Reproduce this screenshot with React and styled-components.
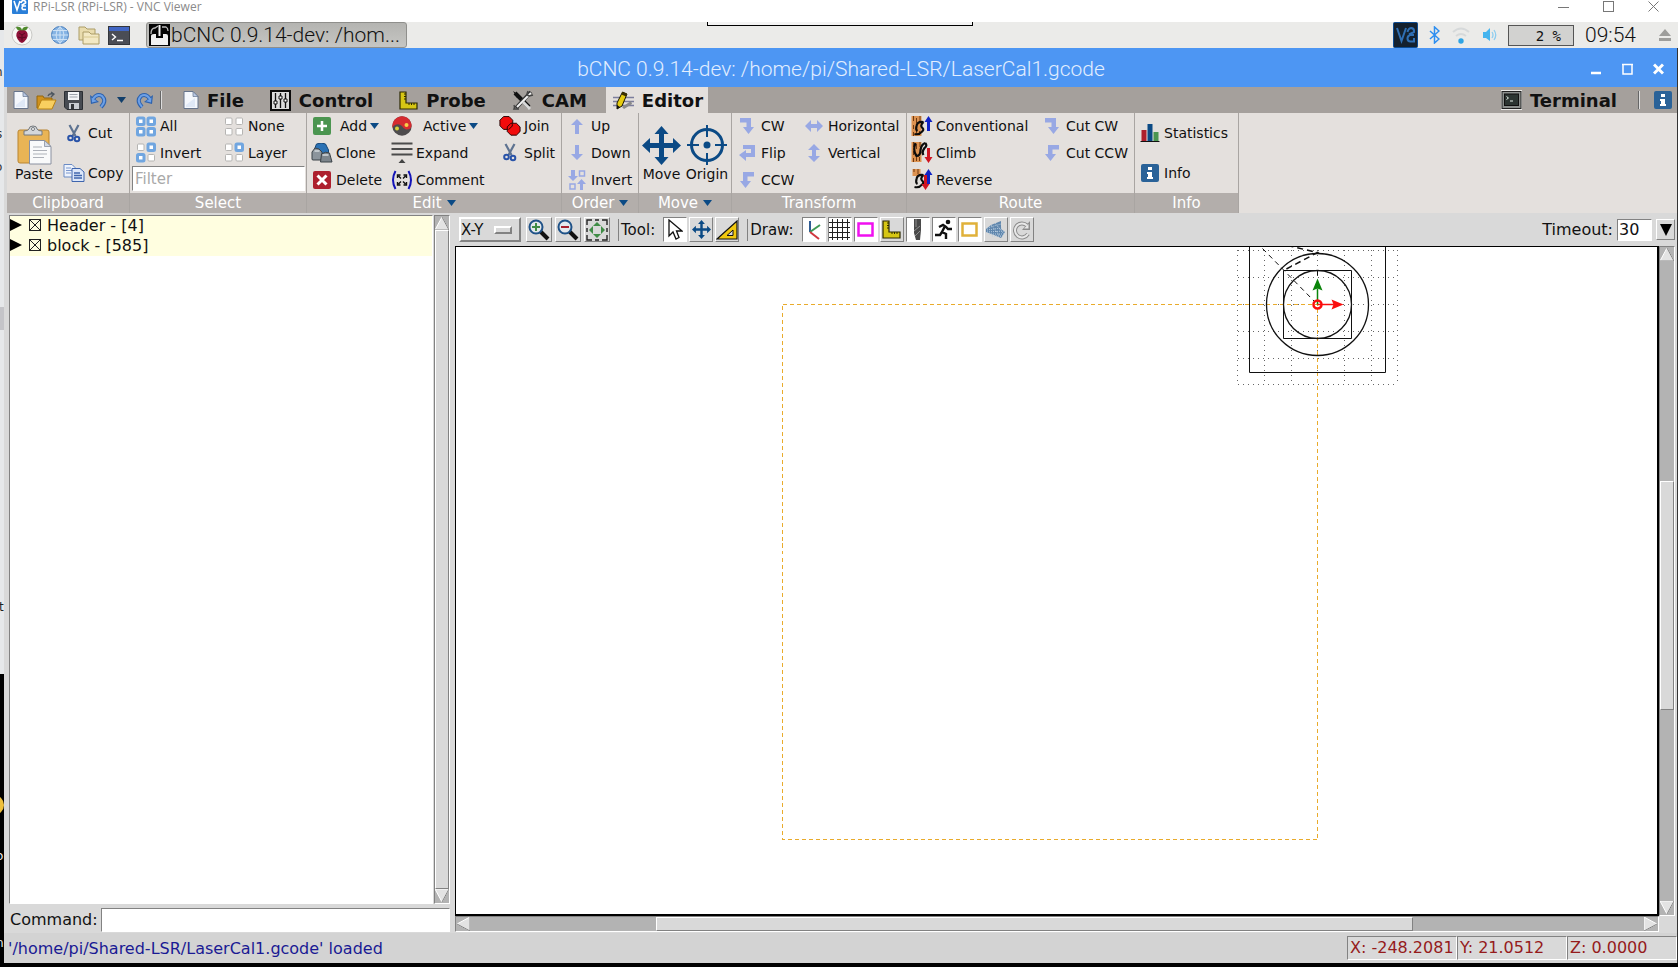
import React, { useState } from 'react';
import styled, { createGlobalStyle, css } from 'styled-components';

/* ---------- icons ---------- */

const Svg = ({ w, h, children, ...rest }) => (
  <svg width={w} height={h} viewBox={`0 0 ${w} ${h}`} fill="none" aria-hidden="true" {...rest}>
    {children}
  </svg>
);

const Caret = ({ color = '#0b4a85' }) => (
  <Svg w={9} h={6}>
    <path d="M0 0h9L4.5 6z" fill={color} />
  </Svg>
);

const VncLogo = () => (
  <Svg w={16} h={16}>
    <rect width="16" height="16" rx="1" fill="#2a7fd8" />
    <path d="M2 3l3 9 3-9M9 5q1-3 3-2.500 2 .5 1.500 2.500L9.500 7.500M14 8H11q-2 2 0 3.500h3" stroke="#fff" strokeWidth="1.600" />
  </Svg>
);

const TrayVnc = () => (
  <Svg w={25} h={26}>
    <rect x=".5" y=".5" width="24" height="25" rx="1" fill="#14212f" stroke="#0b4b93" />
    <path d="M4 6l4.500 13L13 6M14.500 10q1-4 4-4 3 .5 2.500 4l-5 2.500M21 13h-4q-2.500 1-2.500 3.500 0 3 3 3H21v-3.500" stroke="#2f6fb4" strokeWidth="2" />
  </Svg>
);

const Raspberry = () => (
  <Svg w={22} h={22}>
    <circle cx="11" cy="11" r="10" fill="#f8f8f6" stroke="#c9c9c6" />
    <path d="M5 3q5-1 6 3 1-4 6-3-1 4-5 4h-2Q6 7 5 3z" fill="#4f8a2c" />
    <path d="M11 6.500q4-1 5.500 3 1 3-1 5.500-2 3-4.500 4-3-1-4.500-4-2-2.500-1-5.500 1.500-4 5.500-3z" fill="#8e1238" />
    <path d="M8 9l3 2 3-2M7 13l4 1 4-1M11 11v6" stroke="#5c0a22" />
  </Svg>
);

const Globe = () => (
  <Svg w={20} h={20}>
    <circle cx="10" cy="10" r="8.500" fill="#86b4e4" stroke="#4a7fbd" />
    <path d="M10 1.500v17M1.500 10h17M3 5.500h14M3 14.500h14M10 1.500q-8 8.500 0 17 8-8.500 0-17z" stroke="#d5e6f7" strokeWidth=".9" />
  </Svg>
);

const Folders = () => (
  <Svg w={22} h={20}>
    <path d="M1 15V2h6l2 2h8v11z" fill="#e9dcae" stroke="#ab9c66" />
    <path d="M5 19V7h6l2 2h8v10z" fill="#f3e9c4" stroke="#ab9c66" />
    <path d="M5 12h16" stroke="#d7c890" />
  </Svg>
);

const TermIcon = () => (
  <Svg w={22} h={19}>
    <rect x=".5" y=".5" width="21" height="18" fill="#4a4d55" stroke="#33363c" />
    <rect x="1" y="1" width="20" height="4" fill="#4166c4" />
    <path d="M4 8l3.500 3L4 14M9 14.500h6" stroke="#fff" strokeWidth="1.400" />
  </Svg>
);

const TaskIcon = () => (
  <Svg w={21} h={22}>
    <rect width="21" height="22" fill="#050505" />
    <path d="M2 21V12q0-2 3-2h2v4h7v-4h3q2 0 2 2v9z" fill="#f1f1f1" />
    <path d="M2 10q0-6 4-6l3-2M13 3h4q2 1 2 4" stroke="#bbb" strokeWidth="1.300" />
    <path d="M10.500 1v11" stroke="#f1f1f1" strokeWidth="2" />
  </Svg>
);

const Bluetooth = () => (
  <Svg w={11} h={18}>
    <path d="M1 5l9 8-4.500 4V1L10 5l-9 8" stroke="#2d8ef0" strokeWidth="1.500" />
  </Svg>
);

const Wifi = () => (
  <Svg w={20} h={18}>
    <path d="M2 6q8-7 16 0M5 10q5-4 10 0" stroke="#d6d9da" strokeWidth="2" />
    <circle cx="10" cy="15" r="2.700" fill="#2fa4e4" />
  </Svg>
);

const Volume = () => (
  <Svg w={15} h={14}>
    <path d="M1 4h3l4-4v13L4 10H1z" fill="#45b4ee" />
    <path d="M10 4q2 3 0 6M12 2q3.500 5 0 10" stroke="#8ecdf0" strokeWidth="1.300" />
  </Svg>
);

const Eject = () => (
  <Svg w={12} h={12}>
    <path d="M6 0l6 7H0zM0 9h12v3H0z" fill="#9d9d9b" />
  </Svg>
);

const NewDoc = () => (
  <Svg w={16} h={18}>
    <path d="M1 .5h9l5 5v12H1z" fill="#f4f7fc" stroke="#66748c" />
    <path d="M10 .5v5h5z" fill="#b9c9e4" stroke="#66748c" strokeWidth=".7" />
    <path d="M3 14l9-7v9H3z" fill="#dfe8f6" />
  </Svg>
);

const OpenIcon = () => (
  <Svg w={21} h={19}>
    <path d="M1 17V5h6l1 2h8v10z" fill="#d0911d" stroke="#94670d" />
    <path d="M1.500 18l4-9H20l-4 9z" fill="#f8cf60" stroke="#b98213" />
    <path d="M12 5q1-3 5-2M15 1l3 2-3 3" stroke="#4d5660" strokeWidth="1.300" />
  </Svg>
);

const SaveIcon = () => (
  <Svg w={19} h={19}>
    <path d="M.5.5h18v18H3L.5 16z" fill="#474b52" stroke="#2b2e33" />
    <path d="M4 1h11v8H4z" fill="#f4f5f7" />
    <path d="M5.500 3.500h8M5.500 6h8" stroke="#9da2aa" />
    <path d="M5 12h10v6H5z" fill="#c8ccd2" />
    <path d="M7 13h3v5H7z" fill="#33363b" />
  </Svg>
);

const UndoIcon = ({ flip }) => (
  <Svg w={17} h={17}>
    <g transform={flip ? 'translate(17 0) scale(-1 1)' : undefined}>
      <path d="M3 7q4-6 9-3 5 5-1 11" stroke="#2d62ae" strokeWidth="4" />
      <path d="M0 3l1 9 8-2z" fill="#2d62ae" />
      <path d="M3 7q4-6 9-3 5 5-1 11" stroke="#6da0e6" strokeWidth="2" />
      <path d="M1.500 5.500l.5 5 5-1.200z" fill="#6da0e6" />
    </g>
  </Svg>
);

const Sliders = () => (
  <Svg w={21} h={21}>
    <rect x="1" y="1" width="19" height="19" fill="#dcdcdc" stroke="#0c0c0c" strokeWidth="2" />
    <path d="M5.500 3v15M10.500 3v15M15.500 3v15" stroke="#111" strokeWidth="1.300" />
    <path d="M4 11h3v3H4zM9 6h3v3H9zM14 9h3v3h-3z" fill="#fff" stroke="#111" />
  </Svg>
);

const Ruler = () => (
  <Svg w={19} h={19}>
    <path d="M1 1h6v11h11v6H1z" fill="#d6c614" stroke="#2c2800" strokeWidth="1.200" />
    <path d="M7 3H5M7 5.500H5M7 8H5M10 12v2M12.500 12v2M15 12v2" stroke="#2c2800" />
  </Svg>
);

const Tools = () => (
  <Svg w={22} h={21}>
    <path d="M3 3l14 14" stroke="#111" strokeWidth="4" />
    <path d="M19 2L4 18" stroke="#333" strokeWidth="4" />
    <path d="M19 3L5 17" stroke="#f2f2f2" strokeWidth="2" />
    <path d="M11 12l7 7" stroke="#d8d8d8" strokeWidth="3" />
    <path d="M16 1q-2 4 1 5l4-1M2 15q1 2 0 4h5" stroke="#444" strokeWidth="1.500" />
    <path d="M1 1l6 4-2 3z" fill="#111" />
  </Svg>
);

const Pencil = () => (
  <Svg w={21} h={19}>
    <path d="M0 6.500h21M0 10.500h21M0 14.500h21" stroke="#7c7e9d" strokeWidth="1.300" />
    <path d="M9 16l9-6 1 3-8 5z" fill="#8a8a8a" />
    <path d="M9.500 1l4.500 2-5 12-5 3V12z" fill="#e6cc10" stroke="#1c1800" />
    <path d="M9.500 1l4.500 2-1 2.500L8.500 3.500z" fill="#3b2f00" />
    <path d="M4 18v-4l3 2z" fill="#111" />
  </Svg>
);

const Console = () => (
  <Svg w={21} h={20}>
    <rect x="0" y="0" width="21" height="20" fill="#e9e9e7" />
    <rect x="1" y="1.500" width="19" height="17" fill="#8b8f8d" stroke="#222" />
    <rect x="3.500" y="4" width="14" height="11.500" fill="#2c3532" stroke="#111" />
    <path d="M5.500 6.500l2 1.500-2 1.500M9 11h3" stroke="#e5efe8" />
  </Svg>
);

const InfoIcon = () => (
  <Svg w={18} h={18}>
    <rect width="18" height="18" rx="2" fill="#2a6298" />
    <path d="M7 3h4v3H7zM6 8h5v5h1v2H6v-2h1v-3H6z" fill="#fff" />
  </Svg>
);

const PasteIcon = () => (
  <Svg w={35} h={40}>
    <rect x="1" y="5" width="31" height="33" rx="2" fill="#e9b455" stroke="#b98430" />
    <path d="M7 10V6q4 0 5-2 0-3 4-3t4 3q1 2 5 2v4z" fill="#d4d7da" stroke="#75797e" />
    <circle cx="16" cy="4" r="1.500" fill="#fff" stroke="#75797e" />
    <path d="M12.500 15.500h15l6.500 6V39H12.500z" fill="#f9fafb" stroke="#8990a0" />
    <path d="M27.500 15.500v6H34z" fill="#d3dae6" stroke="#8990a0" strokeWidth=".8" />
    <path d="M16 22h9M16 25.500h14M16 29h14M16 32.500h11" stroke="#adb1b9" strokeWidth="1.200" />
  </Svg>
);

const Scissors = () => (
  <Svg w={14} h={19}>
    <path d="M2.500 1l6 11M11.500 1l-6 11" stroke="#5e7391" strokeWidth="2.200" />
    <circle cx="3.500" cy="14" r="2.300" stroke="#2953a8" strokeWidth="2" />
    <circle cx="10" cy="15" r="2.300" stroke="#2953a8" strokeWidth="2" />
  </Svg>
);

const CopyIcon = () => (
  <Svg w={21} h={18}>
    <path d="M.5.5h8l3 3V13H.5z" fill="#eef3fc" stroke="#6b8bc4" />
    <path d="M2.500 4h5M2.500 6.500h6M2.500 9h5" stroke="#7b98cf" />
    <path d="M8.500 4.500h8l4 3.500v9.500h-12z" fill="#dce7fa" stroke="#3f65ad" />
    <path d="M10.500 9h6M10.500 11.500h8M10.500 14h8" stroke="#3f65ad" strokeWidth="1.300" />
  </Svg>
);

// four squares, the set digits are the highlighted ones
const Squares = ({ on = '' }) => (
  <Svg w={21} h={21}>
    {[0, 1, 2, 3].map((i) => {
      const active = on.includes(String(i));
      return (
        <rect
          key={i}
          x={2 + (i % 2) * 10.5}
          y={2 + Math.floor(i / 2) * 10.5}
          width="6.500"
          height="6.500"
          rx="1"
          fill="#fff"
          stroke={active ? '#71a6e0' : '#b5b4b2'}
          strokeWidth={active ? 3 : 1}
        />
      );
    })}
  </Svg>
);

const AddIcon = () => (
  <Svg w={18} h={18}>
    <rect width="18" height="18" rx="2" fill="#4b9550" />
    <path d="M9 4v10M4 9h10" stroke="#fff" strokeWidth="2.500" />
  </Svg>
);

const DeleteIcon = () => (
  <Svg w={18} h={18}>
    <rect width="18" height="18" rx="2" fill="#ad1f2d" />
    <path d="M4.500 4.500l9 9M13.500 4.500l-9 9" stroke="#fff" strokeWidth="3" />
  </Svg>
);

const CloneIcon = () => (
  <Svg w={21} h={20}>
    <path d="M5 1q5-2 9 0l3 6v5H6L3 6z" fill="#2b72b5" stroke="#174777" />
    <path d="M.5 16V9l3-4 4 1 3 3v8H1z" fill="#8b949c" stroke="#3b4248" />
    <path d="M9 19l1-8q4-3 8-1l2.500 9z" fill="#7d858c" stroke="#3b4248" />
    <path d="M3 8h5M11 12h6" stroke="#d4d9dd" strokeWidth="1.500" />
  </Svg>
);

const ActiveIcon = () => (
  <Svg w={20} h={20}>
    <circle cx="10" cy="10" r="9.700" fill="#4d4b4c" />
    <path d="M.5 12A9.700 9.700 0 0 1 19.500 8Q20 14 14 13.500 11 12 10 10 7 7 3 9 1 10 .5 12z" fill="#d62b30" />
    <circle cx="14.500" cy="9" r="2" fill="#f6d04a" />
    <circle cx="5" cy="12.500" r="2" fill="#d5d23a" />
  </Svg>
);

const ExpandIcon = () => (
  <Svg w={21} h={21}>
    <path d="M0 1.500h21M0 7h21M0 12.500h21" stroke="#4b4b4b" strokeWidth="2" />
    <path d="M7 21l3.500-4 3.500 4z" fill="#444" />
  </Svg>
);

const CommentIcon = () => (
  <Svg w={21} h={20}>
    <path d="M4 1Q-1 10 4 19M17 1q5 9 0 18" stroke="#1414b8" strokeWidth="2" />
    <path d="M6 8V5h3M12 5h3v3M15 12v3h-3M9 15H6v-3M7 6l2.500 2.500M14 6l-2.500 2.500M14 14l-2.500-2.500M7 14l2.500-2.500" stroke="#111" strokeWidth="1.400" />
  </Svg>
);

const JoinIcon = () => (
  <Svg w={24} h={22}>
    <path d="M5 .7h6l4 4v6l-4 4H5l-4-4v-6z" fill="#f20c0c" stroke="#1b0000" />
    <path d="M13 8h6l4 4v5l-4 4h-6l-4-4v-5z" fill="#f20c0c" stroke="#1b0000" />
    <path d="M14.500 9v2l-4 4" stroke="#1b0000" />
  </Svg>
);

const soft = '#98a8e4';

const UpArrow = ({ down }) => (
  <Svg w={14} h={15}>
    <path transform={down ? 'rotate(180 7 7.500)' : undefined} d="M7 0l6 6H9v9H5V6H1z" fill={soft} />
  </Svg>
);

const OrderInvert = () => (
  <Svg w={18} h={20}>
    <path d="M3 0h4v6h3l-5 5-5-5h3zM12 20h3v-6h3l-4.500-5L9 14h3z" fill={soft} />
    <rect x="11.500" y="1" width="5" height="5" stroke={soft} strokeWidth="1.500" />
    <rect x="2" y="14" width="5" height="5" stroke={soft} strokeWidth="1.500" />
  </Svg>
);

const MoveIcon = ({ size = 39 }) => (
  <svg width={size} height={size} viewBox="0 0 39 39" aria-hidden="true">
    <path
      d="M19.500 0l7 8h-4.500v9H31v-5l8 7.500-8 7.500v-5h-9V31h4.500l-7 8-7-8H17v-9H8v5l-8-7.500L8 12v5h9V8h-4.500z"
      fill="#0b4a85"
    />
  </svg>
);

const OriginIcon = () => (
  <Svg w={40} h={40}>
    <circle cx="20" cy="20" r="15.500" stroke="#0b4a85" strokeWidth="3" />
    <circle cx="20" cy="20" r="3.500" fill="#0b4a85" />
    <path d="M20 0v12M20 28v12M0 20h12M28 20h12" stroke="#0b4a85" strokeWidth="2" />
  </Svg>
);

const Turn = ({ ccw }) => (
  <Svg w={14} h={16}>
    <path transform={ccw ? 'translate(14 0) scale(-1 1)' : undefined} d="M0 0h11v9h3l-5.500 7L3 9h3.500V4.500H0z" fill={soft} />
  </Svg>
);

const FlipIcon = () => (
  <Svg w={16} h={16}>
    <path d="M4 0h12v12H7v4L0 10l7-5v3h5V4H4z" fill={soft} />
  </Svg>
);

const DoubleArrow = ({ vertical }) => (
  <Svg w={18} h={18}>
    <path transform={vertical ? 'rotate(90 9 9)' : undefined} d="M0 9l6-6v4h6V3l6 6-6 6v-4H6v4z" fill={soft} />
  </Svg>
);

const RouteIcon = ({ up, down }) => (
  <Svg w={21} h={21}>
    <path d={up && down ? 'M1 0h8v7H1z' : 'M0 0h10v20H0z'} fill="#dd9250" />
    <path
      d={up && down ? 'M2.500 0v3M6.500 0v5' : 'M2 0v5M5 2v5M8.500 0v5M2 9v4M5 14v5M2 16v4M8 15v4'}
      stroke="#6e3a12"
    />
    {down && !up ? (
      <path d="M4 1q-3 8 1 13 4 0 4-6 1-6 5-7M14 1q2 3-1 5-3 4-1 7" stroke="#0c0c0c" strokeWidth="2.200" />
    ) : (
      <path d="M12 6q-6-1-7 4-1 4 1 5M12 6q-4 4-1 6 2 2-1 4-2 3-7 2" stroke="#0c0c0c" strokeWidth="2.200" />
    )}
    {up && <path d="M17 0l4 6h-2.500v9h-3V6H13z" fill="#1022c4" />}
    {down && (
      <path
        transform={up ? 'translate(-3 0)' : undefined}
        d="M17 21l4-6h-2.500V6h-3v9H13z"
        fill="#cf1420"
      />
    )}
  </Svg>
);

const StatsIcon = () => (
  <Svg w={19} h={18}>
    <path d="M1 6h5v11H1z" fill="#ad1f2d" />
    <path d="M7 0h5v17H7z" fill="#0b4a85" />
    <path d="M13 8h5v9h-5z" fill="#4b9550" />
    <path d="M0 17.500h19" stroke="#111" />
  </Svg>
);

const Zoomer = ({ out }) => (
  <Svg w={22} h={22}>
    <path d="M12 12l8 8" stroke="#111" strokeWidth="4" />
    <circle cx="8" cy="8" r="6.500" fill="#e3e8ec" stroke="#1f5288" strokeWidth="2" />
    {out ? (
      <path d="M4 8h8" stroke="#a8202c" strokeWidth="2" />
    ) : (
      <path d="M8 4v8M4 8h8" stroke="#3f8c46" strokeWidth="2" />
    )}
  </Svg>
);

const FitIcon = () => (
  <Svg w={22} h={22}>
    <path d="M1 6V1h5M9 1h4M16 1h5v5M21 9v4M21 16v5h-5M13 21H9M6 21H1v-5M1 13V9" stroke="#222" strokeWidth="1.400" />
    <path d="M11 3l4 4H7zM11 19l4-4H7zM3 11l4-4v8zM19 11l-4-4v8z" fill="#3f8c46" />
  </Svg>
);

const Pointer = () => (
  <Svg w={15} h={21}>
    <path d="M1 1v16l4-4 3 7 3-1.500L8.500 12H14z" fill="#fff" stroke="#111" strokeWidth="1.300" />
  </Svg>
);

const Triangle = () => (
  <Svg w={22} h={20}>
    <path d="M1 19L21 1v18z" fill="#f1c80e" stroke="#111" strokeWidth="1.200" />
    <path d="M11 15.500l6-5.500v5.500z" fill="#d9d9d9" stroke="#111" />
  </Svg>
);

const AxesIcon = () => (
  <Svg w={18} h={20}>
    <path d="M5 1v11" stroke="#2f5c94" strokeWidth="2" />
    <path d="M5 12L15 5" stroke="#3f9a55" strokeWidth="2" />
    <path d="M5 12l9 7" stroke="#d0373f" strokeWidth="2" />
  </Svg>
);

const GridIcon = () => (
  <Svg w={21} h={21}>
    <path d="M3.500 0v21M8.500 0v21M13.500 0v21M18.500 0v21M0 3.500h21M0 8.500h21M0 13.500h21M0 18.500h21" stroke="#222" />
  </Svg>
);

const Frame = ({ color }) => (
  <Svg w={17} h={15}>
    <rect x="1.500" y="1.500" width="14" height="12" stroke={color} strokeWidth="2.500" />
  </Svg>
);

const Bit = () => (
  <Svg w={9} h={21}>
    <path d="M1 0h7v11l-1 10H3L1 14z" fill="#4a4a4a" />
    <path d="M1 12l6-5M2 17l5-5M3 0v8" stroke="#8f8f8f" />
  </Svg>
);

const Runner = () => (
  <Svg w={18} h={21}>
    <circle cx="13" cy="3" r="2.300" fill="#111" />
    <path d="M4 8l4-2 3 2 2 2h4M10 7l-3 6 4 2v5M7 13l-2 3H0" stroke="#111" strokeWidth="2.400" />
  </Svg>
);

const Workspace = () => (
  <Svg w={19} h={20}>
    <path d="M0 9l5-4 10-4v8l4 3-4 6-7-3-8-3z" fill="#5f86ad" />
    <path d="M1 8l14-4M1 10l15-2M1 12l17-1M3 14l15 0M6 16l11 0M5 5l10 12M9 3l8 10" stroke="#b9cde0" strokeDasharray="1 1" />
  </Svg>
);

const Refresh = () => (
  <Svg w={20} h={20}>
    <path d="M15 5.500A7 7 0 1 0 16 14" stroke="#8b8b8b" strokeWidth="4" />
    <path d="M18 1v9h-8z" fill="#8b8b8b" />
    <path d="M15 5.500A7 7 0 1 0 16 14" stroke="#e8e8e8" strokeWidth="2" />
    <path d="M16.500 4v4.500H12z" fill="#e8e8e8" />
  </Svg>
);

/* ---------- parts ---------- */

const ARROW_PATHS = {
  up: 'M7 1L14 14H0z',
  down: 'M7 13L0 0h14z',
  left: 'M1 7L14 0v14z',
  right: 'M13 7L0 0v14z',
};

const ScrollBar = ({ vertical, before, thumb, after, label }) => (
  <Track $vertical={vertical} role="group" aria-label={label}>
    <ScrollArrow aria-label={vertical ? 'Scroll up' : 'Scroll left'}>
      <Svg w={14} h={14}>
        <path d={ARROW_PATHS[vertical ? 'up' : 'left']} fill="#e3e3e3" stroke="#fff" />
        <path d={vertical ? 'M7 1l7 13H0' : 'M14 0v14L1 7'} stroke="#828282" />
      </Svg>
    </ScrollArrow>
    <Gap $grow={before} />
    <Thumb $grow={thumb} />
    <Gap $grow={after} />
    <ScrollArrow aria-label={vertical ? 'Scroll down' : 'Scroll right'}>
      <Svg w={14} h={14}>
        <path d={ARROW_PATHS[vertical ? 'down' : 'right']} fill="#e3e3e3" stroke="#fff" />
        <path d={vertical ? 'M14 0L7 13' : 'M0 14l13-7'} stroke="#828282" />
      </Svg>
    </ScrollArrow>
  </Track>
);

const Tool = ({ icon, label, indent, caret }) => (
  <ToolButton $indent={indent}>
    {icon}
    <span>{label}</span>
    {caret && <Caret />}
  </ToolButton>
);

const tabs = [
  { name: 'File', icon: <NewDoc /> },
  { name: 'Control', icon: <Sliders /> },
  { name: 'Probe', icon: <Ruler /> },
  { name: 'CAM', icon: <Tools /> },
  { name: 'Editor', icon: <Pencil /> },
];

const drawTools = [
  { name: 'Axes', icon: <AxesIcon />, on: true },
  { name: 'Grid', icon: <GridIcon />, on: true },
  { name: 'Margin', icon: <Frame color="#f010f0" />, on: true },
  { name: 'Probe', icon: <Ruler /> },
  { name: 'Paths', icon: <Bit />, on: true },
  { name: 'Rapid', icon: <Runner />, on: true },
  { name: 'Workarea', icon: <Frame color="#e0b13a" />, on: true },
  { name: 'Camera', icon: <Workspace /> },
  { name: 'Refresh', icon: <Refresh /> },
];

const blocks = ['Header - [4]', 'block - [585]'];

const gridX = [-80, -53, -26, 0, 27, 54, 80];
const gridY = [-54, -27, 0, 27, 54, 80];

const Plot = () => (
  <PlotSvg aria-label="Toolpath preview">
    <g transform="translate(861.500 57.500)" fill="none" stroke="#111">
      <g stroke="#666" strokeDasharray="1 4" shapeRendering="crispEdges">
        {gridX.map((x) => (
          <path key={x} d={`M${x} -60V80`} />
        ))}
        {gridY.map((y) => (
          <path key={y} d={`M-80 ${y}H80`} />
        ))}
      </g>
      <path d="M-535 0H0V535H-535z" stroke="#e9ab2c" strokeDasharray="4 3" shapeRendering="crispEdges" />
      <path d="M-68 -70V68H68V-70M-34 -34H34V34H-34z" />
      <circle r="34" strokeWidth="1.300" />
      <circle r="51" strokeWidth="1.300" />
      <path d="M-55 -56L-3 -3M0 -34v9" strokeDasharray="5 4" />
      <path d="M-30 -59L0 -52L-34 -34" strokeWidth="1.500" strokeDasharray="6 4" />
      <path d="M0 0V-16" stroke="#0a840a" strokeWidth="1.500" />
      <path d="M0 -26l5 12-5-2-5 2z" fill="#0a840a" stroke="none" />
      <path d="M0 0H16" stroke="#fb0d0d" strokeWidth="1.500" />
      <path d="M26 0l-12 5 2-5-2-5z" fill="#fb0d0d" stroke="none" />
      <circle r="4" stroke="#fb0d0d" strokeWidth="2.500" />
    </g>
  </PlotSvg>
);

const App = () => {
  const [tab, setTab] = useState('Editor');
  const [filter, setFilter] = useState('');
  const [command, setCommand] = useState('');
  const [timeout, setTimeoutValue] = useState('30');
  const [enabled, setEnabled] = useState(blocks.map(() => true));

  const toggleBlock = (index) => {
    setEnabled(enabled.map((v, i) => (i === index ? !v : v)));
  };

  return (
    <Screen>
      <GlobalStyle />
      <Behind aria-hidden="true">
        <rect width="4" height="30" fill="#000" />
        <rect y="30" width="4" height="644" fill="#e6e8ea" />
        <rect y="307" width="4" height="23" fill="#c4c4c8" />
        <circle cx="-6" cy="805" r="10" fill="#efc03c" />
        <text x="-5" y="76" fill="#333">h</text>
        <text x="-4" y="138" fill="#333">s</text>
        <text x="-5" y="171" fill="#333">o</text>
        <text x="-1" y="611" fill="#222">t</text>
        <text x="-4" y="860" fill="#eee">o</text>
        <text x="-4" y="947" fill="#eee">n</text>
      </Behind>
      <Viewer>
        <ViewerBar>
          <VncLogo />
          <span>RPi-LSR (RPi-LSR) - VNC Viewer</span>
          <ViewerButtons>
            <PlainButton aria-label="Minimize viewer">
              <Svg w={11} h={11}><path d="M0 6.500h11" stroke="#777" /></Svg>
            </PlainButton>
            <PlainButton aria-label="Maximize viewer">
              <Svg w={11} h={11}><rect x=".5" y=".5" width="10" height="10" stroke="#777" /></Svg>
            </PlainButton>
            <PlainButton aria-label="Close viewer">
              <Svg w={11} h={11}><path d="M.5.5l10 10M10.500.5l-10 10" stroke="#777" /></Svg>
            </PlainButton>
          </ViewerButtons>
        </ViewerBar>

        <TaskBar>
          <Handle />
          <PlainButton aria-label="Menu"><Raspberry /></PlainButton>
          <Launchers>
            <PlainButton aria-label="Web browser"><Globe /></PlainButton>
            <PlainButton aria-label="File manager"><Folders /></PlainButton>
            <PlainButton aria-label="Terminal"><TermIcon /></PlainButton>
          </Launchers>
          <TaskButton>
            <TaskIcon />
            bCNC 0.9.14-dev: /hom...
          </TaskButton>
          <Tray>
            <TrayVnc />
            <Bluetooth />
            <Wifi />
            <Volume />
            <Cpu>2 %</Cpu>
            <Clock>09:54</Clock>
            <Eject />
          </Tray>
        </TaskBar>

        <Window>
          <TitleBar>
            <TitleText>bCNC 0.9.14-dev: /home/pi/Shared-LSR/LaserCal1.gcode</TitleText>
            <TitleButtons>
              <PlainButton aria-label="Minimize">
                <Svg w={11} h={12}><path d="M0 10h10" stroke="#fff" strokeWidth="2.500" /></Svg>
              </PlainButton>
              <PlainButton aria-label="Maximize">
                <Svg w={11} h={12}><path d="M1 1v10h9V1M0 1.500h11" stroke="#fff" strokeWidth="1.500" /></Svg>
              </PlainButton>
              <PlainButton aria-label="Close">
                <Svg w={11} h={12}><path d="M1 1.500l9 9M10 1.500l-9 9" stroke="#fff" strokeWidth="3" /></Svg>
              </PlainButton>
            </TitleButtons>
          </TitleBar>

          <TabBar>
            <QuickBar>
              <PlainButton aria-label="New"><NewDoc /></PlainButton>
              <PlainButton aria-label="Open"><OpenIcon /></PlainButton>
              <PlainButton aria-label="Save"><SaveIcon /></PlainButton>
              <PlainButton aria-label="Undo"><UndoIcon /></PlainButton>
              <HistoryButton aria-label="Undo history"><Caret color="#123f6b" /></HistoryButton>
              <PlainButton aria-label="Redo"><UndoIcon flip /></PlainButton>
              <Divider />
            </QuickBar>
            <Tabs>
              {tabs.map(({ name, icon }) => (
                <Tab key={name} $active={tab === name} onClick={() => setTab(name)}>
                  {icon}
                  {name}
                </Tab>
              ))}
            </Tabs>
            <TabEnd>
              <Tab>
                <Console />
                Terminal
              </Tab>
              <Divider />
              <PlainButton aria-label="About"><InfoIcon /></PlainButton>
            </TabEnd>
          </TabBar>

          <Ribbon>
            <Group $width={123}>
              <Halves>
                <BigButton $width={54}>
                  <PasteIcon />
                  Paste
                </BigButton>
                <Cells $rows={2} $columns="1fr" $pad={2}>
                  <Tool icon={<Scissors />} label="Cut" />
                  <Tool icon={<CopyIcon />} label="Copy" />
                </Cells>
              </Halves>
              <GroupLabel>Clipboard</GroupLabel>
            </Group>
            <Group $width={177}>
              <Cells $rows={3} $columns="88px 1fr" $pad={5}>
                <Tool icon={<Squares on="0123" />} label="All" />
                <Tool icon={<Squares on="12" />} label="Invert" />
                <FilterInput
                  aria-label="Filter"
                  placeholder="Filter"
                  value={filter}
                  onChange={(e) => setFilter(e.target.value)}
                />
                <Tool icon={<Squares />} label="None" />
                <Tool icon={<Squares on="1" />} label="Layer" />
              </Cells>
              <GroupLabel>Select</GroupLabel>
            </Group>
            <Group $width={255}>
              <Cells $rows={3} $columns="80px 108px 1fr" $pad={4}>
                <Tool icon={<AddIcon />} label="Add" indent={4} caret />
                <Tool icon={<CloneIcon />} label="Clone" />
                <Tool icon={<DeleteIcon />} label="Delete" />
                <Tool icon={<ActiveIcon />} label="Active" indent={7} caret />
                <Tool icon={<ExpandIcon />} label="Expand" />
                <Tool icon={<CommentIcon />} label="Comment" />
                <Tool icon={<JoinIcon />} label="Join" />
                <Tool icon={<Scissors />} label="Split" />
              </Cells>
              <GroupLabel as="button">Edit <Caret /></GroupLabel>
            </Group>
            <Group $width={77}>
              <Cells $rows={3} $columns="1fr" $pad={4}>
                <Tool icon={<UpArrow />} label="Up" />
                <Tool icon={<UpArrow down />} label="Down" />
                <Tool icon={<OrderInvert />} label="Invert" />
              </Cells>
              <GroupLabel as="button">Order <Caret /></GroupLabel>
            </Group>
            <Group $width={93}>
              <Halves>
                <BigButton $width={45}>
                  <MoveIcon />
                  Move
                </BigButton>
                <BigButton $width={46}>
                  <OriginIcon />
                  Origin
                </BigButton>
              </Halves>
              <GroupLabel as="button">Move <Caret /></GroupLabel>
            </Group>
            <Group $width={175}>
              <Cells $rows={3} $columns="67px 1fr" $pad={4}>
                <Tool icon={<Turn />} label="CW" />
                <Tool icon={<FlipIcon />} label="Flip" />
                <Tool icon={<Turn ccw />} label="CCW" />
                <Tool icon={<DoubleArrow />} label="Horizontal" />
                <Tool icon={<DoubleArrow vertical />} label="Vertical" />
              </Cells>
              <GroupLabel>Transform</GroupLabel>
            </Group>
            <Group $width={228}>
              <Cells $rows={3} $columns="130px 1fr" $pad={4}>
                <Tool icon={<RouteIcon up />} label="Conventional" />
                <Tool icon={<RouteIcon down />} label="Climb" />
                <Tool icon={<RouteIcon up down />} label="Reverse" />
                <Tool icon={<Turn />} label="Cut CW" />
                <Tool icon={<Turn ccw />} label="Cut CCW" />
              </Cells>
              <GroupLabel>Route</GroupLabel>
            </Group>
            <Group $width={104}>
              <Cells $rows={2} $columns="1fr" $pad={4}>
                <Tool icon={<StatsIcon />} label="Statistics" />
                <Tool icon={<InfoIcon />} label="Info" />
              </Cells>
              <GroupLabel>Info</GroupLabel>
            </Group>
          </Ribbon>

          <Work>
            <SidePane>
              <TreeBox>
                <Tree>
                  {blocks.map((name, index) => (
                    <TreeRow key={name}>
                      <PlainButton aria-label={`Expand ${name}`}>
                        <Svg w={12} h={12}><path d="M0 0l12 6-12 6z" fill="#000" /></Svg>
                      </PlainButton>
                      <label>
                        <Check
                          type="checkbox"
                          checked={enabled[index]}
                          onChange={() => toggleBlock(index)}
                        />
                        {name}
                      </label>
                    </TreeRow>
                  ))}
                </Tree>
                <ScrollBar vertical before={0} thumb={1} after={0} label="Block list" />
              </TreeBox>
              <CommandRow>
                <label htmlFor="command">Command:</label>
                <CommandInput
                  id="command"
                  value={command}
                  onChange={(e) => setCommand(e.target.value)}
                />
              </CommandRow>
            </SidePane>

            <CanvasPane>
              <CanvasBar>
                <ViewMenu>
                  <ViewSelect aria-label="View" defaultValue="X-Y">
                    <option>X-Y</option>
                    <option>X-Z</option>
                    <option>Y-Z</option>
                  </ViewSelect>
                  <Knob />
                </ViewMenu>
                <ToolSet $gap={3}>
                  <SquareButton $width={26} aria-label="Zoom in"><Zoomer /></SquareButton>
                  <SquareButton $width={26} aria-label="Zoom out"><Zoomer out /></SquareButton>
                  <SquareButton $width={26} aria-label="Fit to screen"><FitIcon /></SquareButton>
                </ToolSet>
                <SetLabel>Tool:</SetLabel>
                <ToolSet>
                  <SquareButton $on aria-label="Select"><Pointer /></SquareButton>
                  <SquareButton aria-label="Pan"><MoveIcon size={19} /></SquareButton>
                  <SquareButton aria-label="Measure"><Triangle /></SquareButton>
                </ToolSet>
                <SetLabel>Draw:</SetLabel>
                <ToolSet>
                  {drawTools.map(({ name, icon, on }) => (
                    <SquareButton key={name} $on={on} aria-label={name}>
                      {icon}
                    </SquareButton>
                  ))}
                </ToolSet>
                <TimeoutBox>
                  <label htmlFor="timeout">Timeout:</label>
                  <TimeoutInput
                    id="timeout"
                    value={timeout}
                    onChange={(e) => setTimeoutValue(e.target.value)}
                  />
                  <SmallButton aria-label="Timeout values">
                    <Svg w={12} h={12}><path d="M0 0h12L6 12z" fill="#000" /></Svg>
                  </SmallButton>
                </TimeoutBox>
              </CanvasBar>
              <CanvasGrid>
                <Canvas><Plot /></Canvas>
                <ScrollBar vertical before={220} thumb={228} after={191} label="Vertical" />
                <ScrollBar before={186} thumb={756} after={231} label="Horizontal" />
              </CanvasGrid>
            </CanvasPane>
          </Work>

          <StatusBar>
            <StatusText>'/home/pi/Shared-LSR/LaserCal1.gcode' loaded</StatusText>
            <Coord>X: -248.2081</Coord>
            <Coord>Y: 21.0512</Coord>
            <Coord>Z: 0.0000</Coord>
          </StatusBar>
        </Window>
      </Viewer>
    </Screen>
  );
};

export default App;

/* ---------- styles ---------- */

const GlobalStyle = createGlobalStyle`
  * {
    box-sizing: border-box;
  }
  body {
    margin: 0;
    background: #000;
    overflow: hidden;
  }
  body, button, input, select {
    font-family: 'DejaVu Sans', sans-serif;
    font-size: 14px;
    color: #111;
  }
  svg {
    display: block;
    flex: none;
  }
`;

const raised = css`
  border: 1px solid;
  border-color: #fff #828282 #828282 #fff;
`;

const sunken = css`
  border: 1px solid;
  border-color: #828282 #fff #fff #828282;
`;

const Screen = styled.div`
  display: flex;
  height: 100vh;
  padding-bottom: 4px;
  background: #000;
`;

const Behind = styled.svg`
  width: 4px;
  height: 100%;
  font-size: 12px;
`;

const Viewer = styled.div`
  display: flex;
  flex: 1;
  flex-direction: column;
  min-width: 0;
`;

const PlainButton = styled.button`
  display: flex;
  padding: 0;
  border: 0;
  background: none;
`;

const ViewerBar = styled.header`
  display: flex;
  align-items: center;
  gap: 5px;
  height: 22px;
  padding: 0 19px 10px 8px;
  background: #fff;
  color: #8a8a8a;
  font-family: 'Open Sans', sans-serif;
  font-size: 12px;
`;

const ViewerButtons = styled.div`
  display: flex;
  gap: 34px;
  margin-left: auto;
`;

const TaskBar = styled.div`
  position: relative;
  display: flex;
  align-items: center;
  height: 26px;
  padding: 0 7px;
  background: #ebebe9;
  font-family: Roboto, sans-serif;
  font-size: 21px;
  font-weight: 300;
`;

// pull-down handle of the viewer toolbar
const Handle = styled.div`
  position: absolute;
  top: 0;
  left: 50%;
  width: 266px;
  height: 4px;
  margin-left: -134px;
  border: 1px solid #000;
  border-top: 0;
  background: #f4f4f4;
`;

const Launchers = styled.div`
  display: flex;
  align-items: center;
  gap: 8px;
  margin: 0 16px 0 17px;
`;

const TaskButton = styled.button`
  display: flex;
  align-items: center;
  gap: 1px;
  width: 261px;
  height: 26px;
  padding: 0 2px;
  border: 1px solid #8f8f8c;
  border-radius: 3px;
  background: linear-gradient(#b4b4b1, #c6c6c3);
  font-family: Roboto, sans-serif;
  font-size: 21px;
  font-weight: 300;
  line-height: 24px;
  white-space: nowrap;
`;

const Tray = styled.div`
  display: flex;
  align-items: center;
  gap: 11px;
  margin-left: auto;
`;

const Cpu = styled.div`
  width: 66px;
  height: 21px;
  padding-right: 12px;
  border: 1px solid #555;
  background: #d2d2d0;
  font-family: 'DejaVu Sans Mono', monospace;
  font-size: 14px;
  font-weight: 400;
  line-height: 20px;
  text-align: right;
`;

const Clock = styled.div`
  margin-right: 12px;
`;

const Window = styled.main`
  display: flex;
  flex: 1;
  flex-direction: column;
  min-height: 0;
  border-right: 1px solid #333;
  background: #d9d9d9;
`;

const TitleBar = styled.div`
  display: flex;
  align-items: center;
  height: 39px;
  padding: 2px 13px 0 87px;
  background: #4d96f3;
`;

const TitleText = styled.div`
  flex: 1;
  color: #e2eeff;
  font-family: Roboto, sans-serif;
  font-size: 21px;
  font-weight: 300;
  text-align: center;
`;

const TitleButtons = styled.div`
  display: flex;
  gap: 20px;
`;

const TabBar = styled.nav`
  display: flex;
  align-items: center;
  height: 26px;
  margin-left: 3px;
  background: #a5a09c;
`;

const QuickBar = styled.div`
  display: flex;
  align-items: center;
  gap: 7px;
  padding-left: 6px;
`;

const HistoryButton = styled(PlainButton)`
  padding: 0 3px;
`;

const Divider = styled.div`
  width: 2px;
  height: 18px;
  border-left: 1px solid #666;
  border-right: 1px solid #ddd;
`;

const Tabs = styled.div`
  display: flex;
  gap: 12px;
  padding-left: 14px;
`;

const Tab = styled.button`
  display: flex;
  align-items: center;
  gap: 8px;
  height: 26px;
  padding: 0 5px 0 7px;
  margin-right: 2px;
  border: 0;
  background: ${({ $active }) => ($active ? '#e4e0dd' : 'transparent')};
  font-size: 18px;
  font-weight: 700;
`;

const TabEnd = styled.div`
  display: flex;
  align-items: center;
  gap: 14px;
  margin-left: auto;
  padding-right: 5px;
`;

const Ribbon = styled.section`
  display: flex;
  height: 100px;
  margin-left: 3px;
  background: #e4e0dd;
`;

const Group = styled.div`
  display: flex;
  flex: none;
  flex-direction: column;
  width: ${({ $width }) => $width}px;
  border-right: 1px solid #a9a5a2;
`;

const GroupLabel = styled.div`
  display: flex;
  align-items: center;
  justify-content: center;
  gap: 5px;
  height: 20px;
  padding: 0;
  border: 0;
  background: #b3aeab;
  color: #fff;
  font-size: 15px;
`;

const Halves = styled.div`
  display: flex;
  height: 80px;
`;

const Cells = styled.div`
  display: grid;
  flex: 1;
  grid-auto-flow: column;
  grid-template-rows: repeat(${({ $rows }) => $rows}, 1fr);
  grid-template-columns: ${({ $columns }) => $columns};
  height: 80px;
  padding-left: ${({ $pad = 0 }) => $pad}px;
`;

const ToolButton = styled.button`
  display: flex;
  align-items: center;
  gap: 3px;
  min-width: 0;
  padding: 0;
  border: 0;
  background: none;
  white-space: nowrap;

  svg:first-child {
    width: 22px;
  }

  span {
    padding-left: ${({ $indent = 0 }) => $indent}px;
  }
`;

const BigButton = styled.button`
  display: flex;
  flex-direction: column;
  align-items: center;
  justify-content: flex-end;
  gap: 1px;
  width: ${({ $width }) => $width}px;
  padding: 0 0 11px;
  border: 0;
  background: none;
`;

const FilterInput = styled.input`
  ${sunken}
  grid-row: 3;
  grid-column: 1 / 3;
  height: 25px;
  margin: 0 1px 0 -3px;
  padding: 0 2px;
  background: #fff;
  font-size: 15px;

  &::placeholder {
    color: #a9a9a9;
  }
`;

const Work = styled.div`
  display: flex;
  flex: 1;
  gap: 5px;
  min-height: 0;
  padding: 0 1px 1px 5px;
  font-size: 16px;
`;

const SidePane = styled.aside`
  display: flex;
  flex-direction: column;
  width: 441px;
  padding-top: 2px;
`;

const TreeBox = styled.div`
  display: flex;
  flex: 1;
  gap: 1px;
  min-height: 0;
`;

const Tree = styled.div`
  ${sunken}
  flex: 1;
  background: #fff;
`;

const TreeRow = styled.div`
  display: flex;
  align-items: center;
  gap: 7px;
  height: 20px;
  padding-bottom: 2px;
  background: #fffee0;

  label {
    display: flex;
    align-items: center;
    gap: 6px;
    font-size: 16px;
  }
`;

const Check = styled.input`
  appearance: none;
  width: 12px;
  height: 12px;
  margin: 0;
  border: 1px solid #222;

  &:checked {
    background:
      linear-gradient(45deg, transparent 46%, #222 46%, #222 54%, transparent 54%),
      linear-gradient(-45deg, transparent 46%, #222 46%, #222 54%, transparent 54%);
  }
`;

const CommandRow = styled.div`
  display: flex;
  align-items: center;
  gap: 3px;
  height: 28px;
  padding: 3px 0 0 1px;
`;

const CommandInput = styled.input`
  ${sunken}
  flex: 1;
  min-width: 0;
  height: 24px;
  background: #fff;
  font-size: 16px;
`;

const Track = styled.div`
  ${sunken}
  display: flex;
  flex: none;
  flex-direction: ${({ $vertical }) => ($vertical ? 'column' : 'row')};
  ${({ $vertical }) => ($vertical ? 'width: 16px;' : 'height: 16px;')}
  background: #b3b3b3;
`;

const ScrollArrow = styled.button`
  display: flex;
  padding: 0;
  border: 0;
  background: none;
`;

const Gap = styled.div`
  flex: ${({ $grow }) => $grow} 0 0;
`;

const Thumb = styled.div`
  ${raised}
  flex: ${({ $grow }) => $grow} 0 0;
  background: #d9d9d9;
`;

const CanvasPane = styled.section`
  display: flex;
  flex: 1;
  flex-direction: column;
  min-width: 0;
`;

const CanvasBar = styled.div`
  display: flex;
  align-items: center;
  height: 33px;
  padding: 0 1px 0 4px;
`;

const ViewMenu = styled.div`
  ${raised}
  display: flex;
  align-items: center;
  gap: 1px;
  width: 62px;
  height: 25px;
  margin-right: 5px;
  border-width: 2px;
`;

const ViewSelect = styled.select`
  appearance: none;
  width: 32px;
  padding: 0;
  border: 0;
  background: none;
  font-size: 15px;
`;

const Knob = styled.div`
  ${raised}
  width: 18px;
  height: 8px;
  border-width: 2px;
`;

const ToolSet = styled.div`
  display: flex;
  gap: ${({ $gap = 2 }) => $gap}px;
`;

const SquareButton = styled.button`
  ${({ $on }) => ($on ? sunken : raised)}
  display: flex;
  align-items: center;
  justify-content: center;
  width: ${({ $width = 24 }) => $width}px;
  height: 25px;
  padding: 0;
  background: ${({ $on }) => ($on ? '#fff' : '#d9d9d9')};
`;

const SetLabel = styled.div`
  margin-left: 8px;
  padding: 0 8px 0 2px;
  border-left: 1px solid #828282;
  font-size: 15px;
  line-height: 22px;
`;

const TimeoutBox = styled.div`
  display: flex;
  align-items: center;
  gap: 4px;
  margin-left: auto;
  font-size: 16px;
`;

const TimeoutInput = styled.input`
  ${sunken}
  width: 35px;
  height: 22px;
  padding: 0 1px;
  background: #fff;
  font-size: 16px;
`;

const SmallButton = styled.button`
  ${raised}
  display: flex;
  align-items: center;
  justify-content: center;
  width: 19px;
  height: 21px;
  padding: 0;
  background: #d9d9d9;
`;

const CanvasGrid = styled.div`
  display: grid;
  flex: 1;
  grid-template-rows: 1fr 16px;
  grid-template-columns: 1fr 17px;
  min-height: 0;
`;

const Canvas = styled.div`
  display: flex;
  min-width: 0;
  border: 1px solid #000;
  border-width: 1px 2px 2px 1px;
  background: #fff;
`;

const PlotSvg = styled.svg`
  width: 100%;
  height: 100%;
`;

const StatusBar = styled.footer`
  display: flex;
  align-items: center;
  height: 30px;
  padding-left: 4px;
  background: #d3d3d3;
  font-size: 16px;
`;

const StatusText = styled.div`
  flex: 1;
  color: #1a1a94;
`;

const Coord = styled.div`
  ${sunken}
  width: 110px;
  height: 24px;
  padding-left: 2px;
  background: #d9d9d9;
  color: #951b1b;
  line-height: 22px;
`;
